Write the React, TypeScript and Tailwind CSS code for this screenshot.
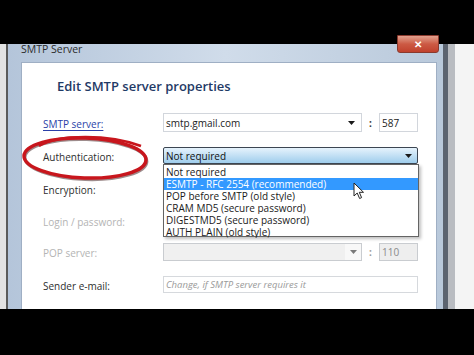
const font = { fontFamily: '"Open Sans", "Noto Sans", sans-serif' }

function Arrow({ muted = false }: { muted?: boolean }) {
  return (
    <svg width="7" height="4" viewBox="0 0 7 4" className="shrink-0">
      <path d="M0 0 L7 0 L3.5 4 Z" fill={muted ? '#7a7a7a' : '#1a1a1a'} />
    </svg>
  )
}

function Label({ children, muted = false, link = false }: { children: string; muted?: boolean; link?: boolean }) {
  return (
    <div className="w-[141px] shrink-0 pl-[21px] leading-[14px]">
      <span
        className={
          link
            ? 'text-[10px] text-[#2b3fa8] underline underline-offset-2'
            : muted
              ? 'text-[10px] text-[#b4b4b4]'
              : 'text-[10px] font-medium text-[#2e2e2e]'
        }
      >
        {children}
      </span>
    </div>
  )
}

const options = [
  'Not required',
  'ESMTP - RFC 2554 (recommended)',
  'POP before SMTP (old style)',
  'CRAM MD5 (secure password)',
  'DIGESTMD5 (secure password)',
  'AUTH PLAIN (old style)',
]

export default function App() {
  return (
    <div className="flex h-[355px] w-[474px] flex-col overflow-hidden bg-[#f4f4f4]" style={font}>
      <div className="h-[44px] shrink-0 bg-black" />

      <div className="flex h-[265px] w-[474px] shrink-0 bg-[#f4f4f4]">
        <div className="w-[6px] shrink-0 bg-[#e2e2e2]" />

        {/* window */}
        <div className="flex w-[442px] shrink-0 flex-col border-l-2 border-r-[5px] border-l-[#5a5a5a] border-r-[#5c6470] bg-gradient-to-r from-[#b4c5da] via-[#d0dcea] to-[#b9c9db]">
          <div className="flex h-[18px] shrink-0 items-start justify-between pl-[13px] pr-[4px]">
            <span className="mt-[-1px] text-[10.5px] leading-[12px] text-[#2b2b2b]">SMTP Server</span>
            <div className="mt-[-9px] flex h-[18px] w-[42px] items-center justify-center rounded-b-[3px] border border-[#8a3a2e] bg-gradient-to-b from-[#e0a08e] via-[#cc5a44] to-[#c0412d]">
              <span className="text-[10px] leading-none font-bold text-white">✕</span>
            </div>
          </div>

          <div className="flex flex-1 pl-[13px] pr-[6px]">
            <div className="relative flex-1 border border-b-0 border-[#9fafc4] bg-white">
              <div className="pl-[35px] pt-[13px]">
                <h1 className="h-[20px] text-[13px] font-semibold leading-[20px] text-[#1f3a66]">
                  Edit SMTP server properties
                </h1>
              </div>

              <div className="mt-[17px] flex flex-col">
                {/* SMTP server */}
                <div className="flex h-[19px] items-center">
                  <Label link>SMTP server:</Label>
                  <div className="flex h-full w-[199px] items-center justify-between border border-[#d2d6dc] bg-white pl-[2px] pr-[6px]">
                    <span className="text-[10px] leading-[14px] text-[#222]">smtp.gmail.com</span>
                    <Arrow />
                  </div>
                  <div className="w-[17px] text-center text-[10px] leading-[14px] font-bold text-[#333]">:</div>
                  <div className="flex h-full w-[39px] items-center border border-[#d2d6dc] pl-[2px] text-[10px] leading-[14px] text-[#222]">
                    587
                  </div>
                </div>

                {/* Authentication */}
                <div className="mt-[15px] flex h-[17px] items-center">
                  <Label>Authentication:</Label>
                  <div className="relative h-full w-[255px]">
                    <div className="flex h-full items-center justify-between rounded-[2px] border border-[#3c4652] bg-gradient-to-b from-[#e6f3fc] to-[#9fcdec] pl-[2px] pr-[5px]">
                      <span className="text-[10px] leading-[14px] text-[#111]">Not required</span>
                      <Arrow />
                    </div>
                    <div className="absolute left-0 top-full z-10 h-[73px] w-[256px] border border-[#646464] bg-white pt-[1px] shadow-[2px_2px_3px_rgba(0,0,0,0.25)]">
                      {options.map((o, i) => (
                        <div
                          key={o}
                          className={
                            i === 1
                              ? 'h-[12px] overflow-hidden bg-[#3399ff] pl-[2px] text-[10px] leading-[12px] text-white'
                              : 'h-[12px] overflow-hidden pl-[2px] text-[10px] leading-[12px] text-[#1a1a1a]'
                          }
                        >
                          {o}
                        </div>
                      ))}
                    </div>
                  </div>
                </div>

                {/* Encryption */}
                <div className="mt-[16px] flex h-[17px] items-center">
                  <Label>Encryption:</Label>
                </div>

                {/* Login */}
                <div className="mt-[15px] flex h-[17px] items-center">
                  <Label muted>Login / password:</Label>
                </div>

                {/* POP server */}
                <div className="mt-[14px] flex h-[18px] items-center">
                  <Label muted>POP server:</Label>
                  <div className="flex h-full w-[199px] items-center border border-[#c9ccd0] bg-[#f0f0f0]">
                    <div className="flex-1" />
                    <div className="flex h-full w-[16px] items-center justify-center bg-[#f8f8f8]">
                      <Arrow muted />
                    </div>
                  </div>
                  <div className="w-[17px] text-center text-[10px] leading-[14px] font-bold text-[#9a9a9a]">:</div>
                  <div className="flex h-full w-[39px] items-center border border-[#c9ccd0] bg-[#eeeeee] pl-[2px] text-[10px] leading-[14px] text-[#8a8a8a]">
                    110
                  </div>
                </div>

                {/* Sender */}
                <div className="mt-[15px] flex h-[17px] items-center">
                  <Label>Sender e-mail:</Label>
                  <div className="flex h-full w-[255px] items-center border border-[#d6d9dd] pl-[2px]">
                    <span className="text-[9.5px] leading-[14px] italic text-[#9a9a9a]">Change, if SMTP server requires it</span>
                  </div>
                </div>
              </div>

              {/* red hand-drawn ellipse */}
              <svg className="pointer-events-none absolute left-[-3px] top-[67px]" width="134" height="52" viewBox="0 0 134 52">
                <ellipse cx="66" cy="28" rx="61" ry="20" fill="none" stroke="rgba(40,0,0,0.45)" strokeWidth="3" transform="rotate(2 66 28) translate(1 1.5)" />
                <ellipse cx="66" cy="28" rx="61" ry="20" fill="none" stroke="#c8161d" strokeWidth="3.5" transform="rotate(2 66 28)" />
                <path d="M20 16 C 40 4, 90 4, 122 16" fill="none" stroke="#c8161d" strokeWidth="2.5" />
              </svg>

              {/* mouse cursor */}
              <svg className="pointer-events-none absolute left-[331px] top-[119px] z-20" width="12" height="18" viewBox="0 0 12 18">
                <path d="M1 1 L1 14 L4.2 11 L6.6 16.5 L8.6 15.6 L6.3 10.3 L10.5 10.3 Z" fill="#fff" stroke="#222" strokeWidth="1" strokeLinejoin="round" />
              </svg>
            </div>
          </div>
        </div>

        <div className="w-[7px] shrink-0 bg-[#b9bcc1]" />
        <div className="flex-1 bg-[#f4f4f4]" />
      </div>

      <div className="flex-1 bg-black" />
    </div>
  )
}
